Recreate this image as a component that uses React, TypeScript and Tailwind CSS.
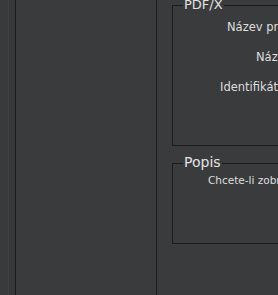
export default function App() {
  const font = { fontFamily: '"DejaVu Sans", "Liberation Sans", sans-serif' };
  return (
    <div className="w-[278px] h-[295px] overflow-hidden bg-[#3a3b3d] flex text-[#dedede]" style={font}>
      <div className="w-[15px] h-full flex shrink-0">
        <div className="w-[8px] bg-[#393a3c]" />
        <div className="w-[1px] bg-[#404143]" />
        <div className="w-[1px] bg-[#363739]" />
        <div className="flex-1 bg-[#38393b]" />
      </div>
      <div className="w-[1px] h-full bg-[#1c1c1e] shrink-0" />
      <div className="w-[140px] h-full bg-[#3a3b3d] shrink-0" />
      <div className="w-[1px] h-full bg-[#1f2022] shrink-0" />
      <div className="flex-1 min-w-0 pl-[15px] pt-[5px] flex flex-col">
        <div className="relative w-[300px] h-[141px] border border-[#1c1c1e] shrink-0">
          <span className="absolute left-[10px] top-[-9px] px-[1px] bg-[#3a3b3d] text-[13px] leading-[16px] text-[#e2e2e2]">PDF/X</span>
          <div className="flex flex-col text-[11.5px] leading-[14px] pt-[14px] gap-[16px] whitespace-nowrap">
            <div className="pl-[54px]">Název profilu výstupu:</div>
            <div className="pl-[83px]">Název podmínky:</div>
            <div className="pl-[47px]">Identifikátor podmínky:</div>
          </div>
        </div>
        <div className="relative w-[300px] h-[81px] mt-[17px] border border-[#1c1c1e] shrink-0">
          <span className="absolute left-[10px] top-[-10px] px-[1px] bg-[#3a3b3d] text-[14px] leading-[17px] text-[#e2e2e2]">Popis</span>
          <div className="pl-[35px] pt-[10px] text-[10.5px] leading-[13px] whitespace-nowrap">Chcete-li zobrazit popis, umístěte ukazatel myši nad nadpis.</div>
        </div>
      </div>
    </div>
  );
}
